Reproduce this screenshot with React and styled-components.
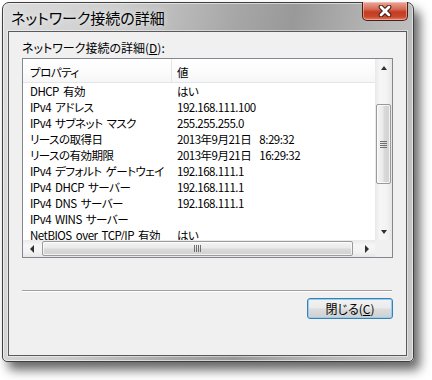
import React from "react";
import styled, { createGlobalStyle } from "styled-components";

const GlobalStyle = createGlobalStyle`
  html, body {
    margin: 0;
    padding: 0;
    background: #ffffff;
  }
  body {
    font-family: "Noto Sans CJK JP", "Liberation Sans", sans-serif;
    font-size: 12px;
    color: #000;
    font-feature-settings: "palt";
  }
`;

const Stage = styled.div`
  width: 432px;
  height: 380px;
  padding: 2px 0 0 2px;
  box-sizing: border-box;
`;

const Window = styled.div`
  width: 412px;
  height: 360px;
  box-sizing: border-box;
  border: 1px solid #3f3f3f;
  border-radius: 7px 7px 5px 5px;
  background: linear-gradient(
    100deg,
    #dcdcdc 0%,
    #cdcdcd 25%,
    #a6a6a6 50%,
    #999999 62%,
    #b6b6b6 80%,
    #cbcbcb 100%
  );
  box-shadow: inset 0 0 0 1px rgba(255, 255, 255, 0.55),
    6px 8px 11px rgba(0, 0, 0, 0.6);
  display: flex;
  flex-direction: column;
`;

const TitleBar = styled.div`
  height: 28px;
  display: flex;
  align-items: center;
  justify-content: space-between;
  padding-left: 8px;
  padding-right: 5px;
`;

const Caption = styled.span`
  font-size: 15px;
  color: #000;
  text-shadow: 0 0 6px rgba(255, 255, 255, 0.9);
`;

const CloseButton = styled.div`
  align-self: flex-start;
  margin-top: -1px;
  width: 46px;
  height: 19px;
  box-sizing: border-box;
  border: 1px solid #4a1e16;
  border-top: none;
  border-radius: 0 0 5px 5px;
  background: linear-gradient(
    #e9a899 0%,
    #d66a55 40%,
    #c43b24 55%,
    #c9452b 80%,
    #e07b5e 100%
  );
  box-shadow: inset 0 0 0 1px rgba(255, 210, 200, 0.5);
  display: flex;
  align-items: center;
  justify-content: center;
`;

const Client = styled.div`
  flex: 1;
  margin: 0 6px 5px 5px;
  border: 1px solid #5a5a5a;
  background: #f0f0f0;
  box-shadow: 0 0 0 1px rgba(255, 255, 255, 0.45);
  display: flex;
  flex-direction: column;
  padding: 9px 13px 0 13px;
`;

const FieldLabel = styled.div`
  line-height: 14px;
  height: 14px;
  margin-bottom: 3px;
`;

const Key = styled.span`
  text-decoration: underline;
`;

const ListBox = styled.div`
  height: 200px;
  box-sizing: border-box;
  border: 1px solid #828790;
  background: #fff;
  display: grid;
  grid-template-columns: 1fr 17px;
  grid-template-rows: 1fr 17px;
`;

const Viewport = styled.div`
  overflow: hidden;
  font-size: 11.5px;
  letter-spacing: -0.5px;
  word-spacing: 2px;
`;

const HeaderRow = styled.div`
  height: 24px;
  display: grid;
  grid-template-columns: 149px 1fr;
  background: linear-gradient(#ffffff, #fbfbfb 60%, #f5f6f7);
  border-bottom: 1px solid #e5e5e5;
  box-sizing: border-box;
`;

const HeaderCell = styled.div`
  padding-left: ${(p) => p.$pad}px;
  padding-top: 3px;
  line-height: 20px;
  border-right: ${(p) => (p.$divider ? "1px solid #e5e5e5" : "none")};
  white-space: nowrap;
`;

const Row = styled.div`
  height: 16px;
  display: grid;
  grid-template-columns: 149px 1fr;
`;

const Cell = styled.div`
  padding-left: ${(p) => p.$pad}px;
  padding-right: ${(p) => (p.$clip ? 12 : 0)}px;
  line-height: 16px;
  white-space: pre;
  overflow: hidden;
`;

const VScroll = styled.div`
  display: flex;
  flex-direction: column;
  background: linear-gradient(to right, #e9e9e9, #f6f6f6 30%, #f3f3f3 70%, #e6e6e6);
`;

const HScroll = styled.div`
  display: flex;
  background: linear-gradient(#e9e9e9, #f6f6f6 30%, #f3f3f3 70%, #e6e6e6);
`;

const ArrowButton = styled.div`
  width: 17px;
  height: 17px;
  flex: none;
  display: flex;
  align-items: center;
  justify-content: center;
`;

const Track = styled.div`
  flex: 1;
  display: flex;
  flex-direction: ${(p) => (p.$vertical ? "column" : "row")};
`;

const Thumb = styled.div`
  box-sizing: border-box;
  border: 1px solid #9a9a9a;
  border-radius: 2px;
  display: flex;
  align-items: center;
  justify-content: center;
  ${(p) =>
    p.$vertical
      ? `
    margin: 0 1px;
    background: linear-gradient(to right, #f4f4f4, #eaeaea 45%, #d9d9d9 55%, #d2d2d2);
  `
      : `
    margin: 1px 0;
    background: linear-gradient(#f4f4f4, #eaeaea 45%, #d9d9d9 55%, #d2d2d2);
  `}
  box-shadow: inset 0 0 0 1px rgba(255, 255, 255, 0.7);
`;

const Corner = styled.div`
  background: #f0f0f0;
`;

const Separator = styled.div`
  margin-top: 32px;
  height: 1px;
  width: 370px;
  background: #a0a0a0;
  border-bottom: 1px solid #ffffff;
`;

const Footer = styled.div`
  display: flex;
  justify-content: flex-end;
  padding-top: 6px;
`;

const PushButton = styled.div`
  width: 86px;
  height: 21px;
  box-sizing: border-box;
  border: 1px solid #3c7fb1;
  border-radius: 3px;
  background: linear-gradient(#f2f2f2 0%, #ebebeb 48%, #dddddd 52%, #cfcfcf 100%);
  box-shadow: inset 0 0 0 1px #8fd1f4;
  display: flex;
  align-items: center;
  justify-content: center;
  line-height: 19px;
`;

const ArrowIcon = ({ dir }) => {
  const shapes = {
    up: "M1 5 L4 1 L7 5 Z",
    down: "M1 1 L4 5 L7 1 Z",
    left: "M5 0 L1 4 L5 8 Z",
    right: "M1 0 L5 4 L1 8 Z",
  };
  const vertical = dir === "up" || dir === "down";
  return (
    <svg
      width={vertical ? 8 : 6}
      height={vertical ? 6 : 8}
      viewBox={vertical ? "0 0 8 6" : "0 0 6 8"}
    >
      <path d={shapes[dir]} fill="#303030" />
    </svg>
  );
};

const Grip = ({ vertical }) => (
  <svg width={7} height={7} viewBox="0 0 7 7">
    {[0, 2, 4, 6].map((o) =>
      vertical ? (
        <line key={o} x1="0" y1={o + 0.5} x2="7" y2={o + 0.5} stroke="#6e6e6e" />
      ) : (
        <line key={o} x1={o + 0.5} y1="0" x2={o + 0.5} y2="7" stroke="#6e6e6e" />
      )
    )}
  </svg>
);

const CloseGlyph = () => (
  <svg width="14" height="12" viewBox="0 0 14 12">
    <path
      d="M3 2 L11 10 M11 2 L3 10"
      stroke="#3a1a12"
      strokeWidth="4.6"
      strokeLinecap="round"
    />
    <path
      d="M3 2 L11 10 M11 2 L3 10"
      stroke="#ffffff"
      strokeWidth="2.8"
      strokeLinecap="round"
    />
  </svg>
);

const rows = [
  ["DHCP 有効", "はい"],
  ["IPv4 アドレス", "192.168.111.100"],
  ["IPv4 サブネット マスク", "255.255.255.0"],
  ["リースの取得日", "2013年9月21日  8:29:32"],
  ["リースの有効期限", "2013年9月21日  16:29:32"],
  ["IPv4 デフォルト ゲートウェイ", "192.168.111.1"],
  ["IPv4 DHCP サーバー", "192.168.111.1"],
  ["IPv4 DNS サーバー", "192.168.111.1"],
  ["IPv4 WINS サーバー", ""],
  ["NetBIOS over TCP/IP 有効", "はい"],
];

const App = () => {
  return (
    <Stage>
      <GlobalStyle />
      <Window>
        <TitleBar>
          <Caption>ネットワーク接続の詳細</Caption>
          <CloseButton>
            <CloseGlyph />
          </CloseButton>
        </TitleBar>
        <Client>
          <FieldLabel>
            ネットワーク接続の詳細(<Key>D</Key>):
          </FieldLabel>
          <ListBox>
            <Viewport>
              <HeaderRow>
                <HeaderCell $pad={7} $divider>
                  プロパティ
                </HeaderCell>
                <HeaderCell $pad={5}>値</HeaderCell>
              </HeaderRow>
              {rows.map(([name, value]) => (
                <Row key={name}>
                  <Cell $pad={7} $clip>
                    {name}
                  </Cell>
                  <Cell $pad={5}>{value}</Cell>
                </Row>
              ))}
            </Viewport>
            <VScroll>
              <ArrowButton>
                <ArrowIcon dir="up" />
              </ArrowButton>
              <Track $vertical>
                <Thumb $vertical style={{ marginTop: 28, height: 80 }}>
                  <Grip vertical />
                </Thumb>
              </Track>
              <ArrowButton>
                <ArrowIcon dir="down" />
              </ArrowButton>
            </VScroll>
            <HScroll>
              <ArrowButton>
                <ArrowIcon dir="left" />
              </ArrowButton>
              <Track>
                <Thumb style={{ marginLeft: 2, width: 311 }}>
                  <Grip />
                </Thumb>
              </Track>
              <ArrowButton>
                <ArrowIcon dir="right" />
              </ArrowButton>
            </HScroll>
            <Corner />
          </ListBox>
          <Separator />
          <Footer>
            <PushButton>
              閉じる(<Key>C</Key>)
            </PushButton>
          </Footer>
        </Client>
      </Window>
    </Stage>
  );
};

export default App;
